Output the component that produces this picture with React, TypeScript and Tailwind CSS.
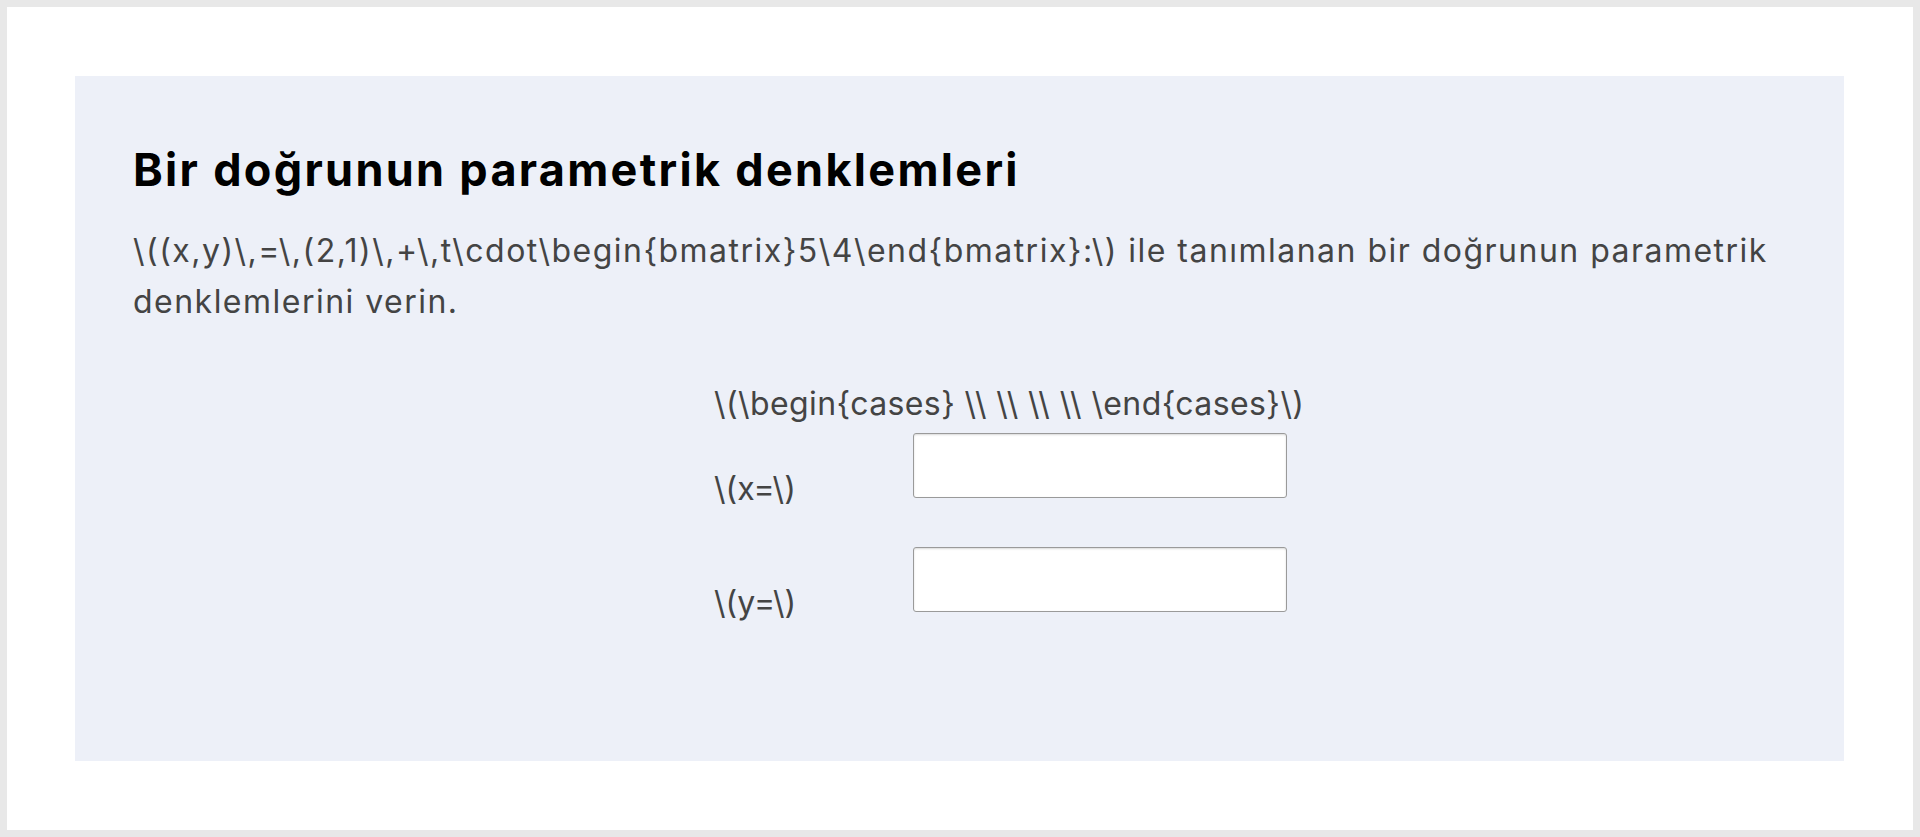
import React from 'react';

const font = { fontFamily: 'Inter, "DejaVu Sans", sans-serif' };

const AnswerRow = ({ label }: { label: string }) => {
    return (
        <div className="flex items-end">
            <span className="w-[199px] text-[32px] leading-none text-[#444] mb-[-7px]">{label}</span>
            <input
                type="text"
                className="w-[374px] h-[65px] bg-white border border-[#9a9a9a] rounded-[3px] shadow-[inset_0_1px_2px_rgba(0,0,0,0.15)] outline-none"
            />
        </div>
    );
};

export default function App() {
    return (
        <div className="min-h-[837px] bg-[#e8e8e8] p-[7px]" style={font}>
            <div className="bg-white h-[823px] pt-[69px] pl-[68px] pr-[69px]">
                <div className="bg-[#edf0f8] h-[685px] px-[58px] pt-[67px]">
                    <h1 className="text-[45px] font-bold leading-[54px] tracking-[2.3px] text-black">
                        Bir doğrunun parametrik denklemleri
                    </h1>
                    <p className="mt-[28px] text-[32px] leading-[51px] tracking-[1.48px] text-[#444]">
                        {'\\((x,y)\\,=\\,(2,1)\\,+\\,t\\cdot\\begin{bmatrix}5\\4\\end{bmatrix}:\\) ile tanımlanan bir doğrunun parametrik denklemlerini verin.'}
                    </p>
                    <div className="ml-[581px] mt-[57px] flex flex-col">
                        <div className="text-[32px] leading-[40px] tracking-[0.4px] text-[#444]">
                            {'\\(\\begin{cases} \\\\ \\\\ \\\\ \\\\ \\end{cases}\\)'}
                        </div>
                        <div className="mt-[9px] flex flex-col gap-[49px]">
                            <AnswerRow label={'\\(x=\\)'} />
                            <AnswerRow label={'\\(y=\\)'} />
                        </div>
                    </div>
                </div>
            </div>
        </div>
    );
}
